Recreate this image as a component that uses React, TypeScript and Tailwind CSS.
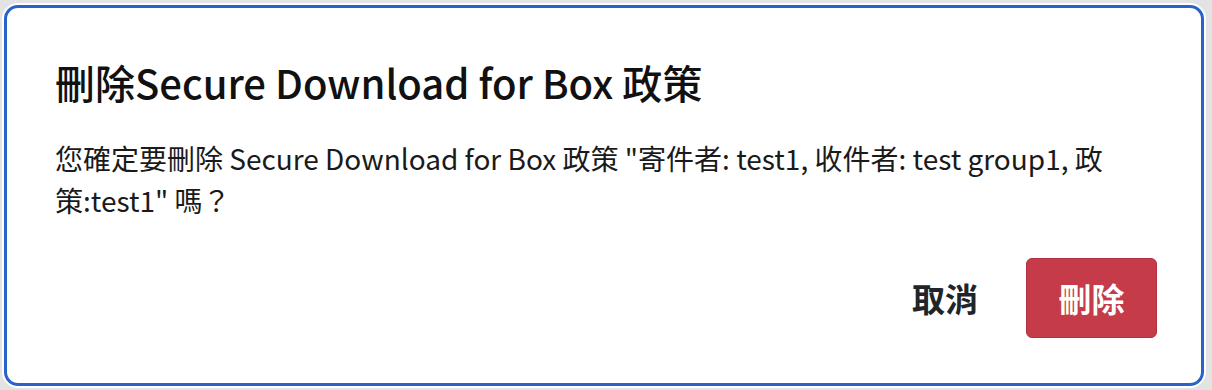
import React from 'react';

export default function App() {
  return (
    <div
      className="relative h-[390px] w-[1212px] overflow-hidden bg-[#e3e3e3] pl-[4px] pt-[5px]"
      style={{ fontFamily: '"Noto Sans CJK TC", "Noto Sans", sans-serif' }}
    >
      {/* dialog */}
      <div className="flex h-[381px] w-[1200px] flex-col rounded-[14px] border-[3px] border-[#2a62c9] bg-white pl-[48px] pr-[44px] pt-[50px] shadow-[0_0_0_2px_#ffffff]">
        <h2 className="text-[40px] font-medium leading-[48px] text-[#111111]">
          刪除Secure Download for Box 政策
        </h2>
        <p className="mt-[31px] text-[28px] leading-[42px] text-[#1a1a1a]">
          您確定要刪除 Secure Download for Box 政策 "寄件者: test1, 收件者: test group1, 政策:test1" 嗎？
        </p>
        <div className="mt-auto mb-[45px] flex items-center justify-end gap-[48px]">
          <button className="text-[33px] font-bold leading-none text-[#212529]">取消</button>
          <button className="h-[80px] w-[131px] rounded-[6px] border border-[#b2313f] bg-[#c53b4a] text-[33px] font-bold leading-none text-white">
            刪除
          </button>
        </div>
      </div>
    </div>
  );
}
